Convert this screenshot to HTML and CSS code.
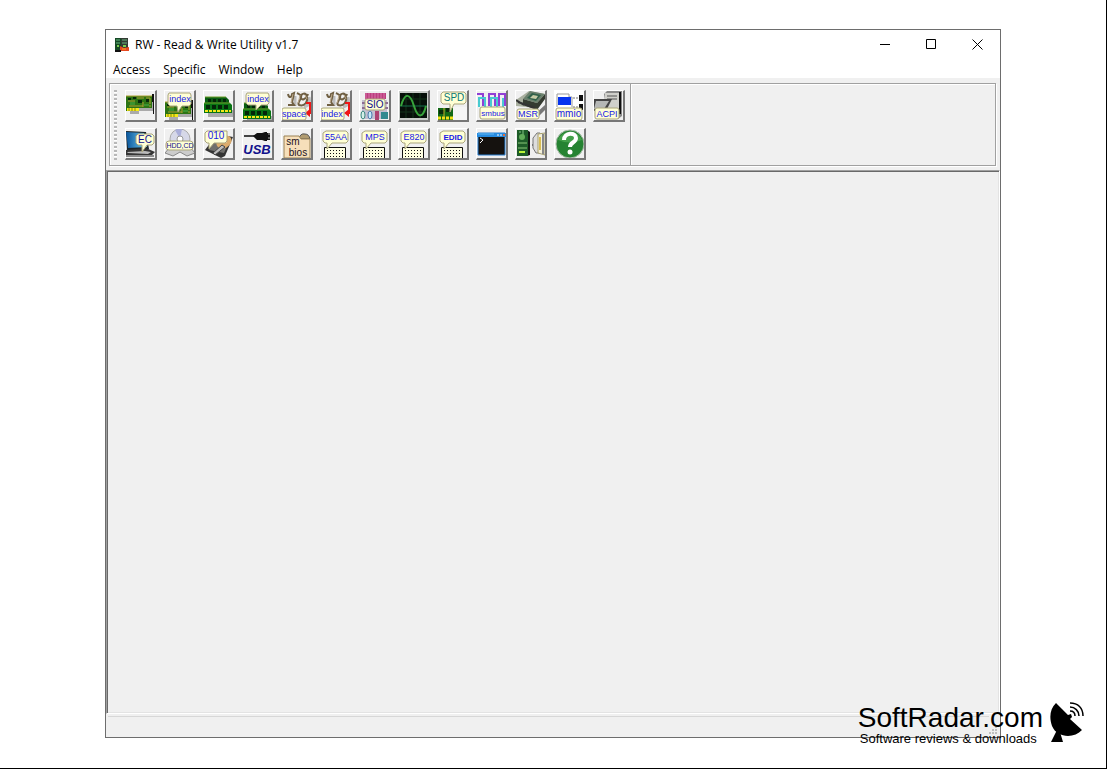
FILE: index.html
```html
<!DOCTYPE html>
<html lang="en">
<head>
<meta charset="utf-8">
<title>RW - Read &amp; Write Utility v1.7</title>
<link rel="stylesheet" href="styles.css">
</head>
<body>
<svg class="defs" aria-hidden="true">
  <defs>
    <symbol id="card" viewBox="0 0 32 32" overflow="visible">
      <path d="M5 11h24v10H14v3H5z" fill="#aaa"/>
      <path d="M1 6h26v12H14v3H1z" fill="#2c7414"/>
      <path d="M1 6h26M3 11h7M12 8h7M21 8h4v6M4 16h14M18 12v5M24 16h2" stroke="#b0a030" fill="none"/>
      <path d="M3 8h3v2H3zM8 7h3v2H8zM13 10h4v3h-4zM21 9h3v3h-3z" fill="#06280a"/>
      <path d="M5 12h5v3H5zM19 14h5v2h-5z" fill="#39932f"/>
      <path d="M2 18h12v3H2z" fill="#f4ea18"/><path d="M4 18v3M7 18v3M10 18v3" stroke="#8a8610"/>
      <path d="M27 4h2v20h-1V12h-1z" fill="#111"/>
    </symbol>
    <symbol id="ram" viewBox="0 0 32 32" overflow="visible">
      <path d="M5 20h26v7H5z" fill="#aaa"/>
      <path d="M2 7h21l3 3v6H2z" fill="#0a5d13"/>
      <path d="M1 13h26l2 2v8H1z" fill="#087414"/>
      <path d="M5 9h3v3H5zM10 9h3v3h-3zM15 9h3v3h-3zM20 9h3v3h-3zM3 15h4v4H3zM9 15h4v4H9zM15 15h4v4h-4zM21 15h4v4h-4z" fill="#042508"/>
      <path d="M2 7h21M1 13h26" stroke="#6d9f28"/>
      <path d="M2 21h26" stroke="#f4e818" stroke-width="2" stroke-dasharray="3 1"/>
    </symbol>
    <symbol id="pad" viewBox="0 0 32 32" overflow="visible">
      <path d="M4.500 19.500h21v11h-21z" fill="#ffffe1" stroke="#111"/>
      <path d="M7 22.500h17M7 25.500h17M7 28.500h17" stroke="#111" stroke-dasharray="1 2"/>
    </symbol>
    <symbol id="balloon" viewBox="0 0 32 32" overflow="visible">
      <path d="M6 3h20l2 2v8l-2 2H12l-5 6v-6H5l-2-2V5z" fill="#ffffd5" stroke="#aaa57d"/>
    </symbol>
    <symbol id="serial" viewBox="0 0 32 32" overflow="visible">
      <g fill="none" stroke="#bbb" stroke-width="3"><path d="M14 6v10M28 7q2 8-5 10"/></g>
      <g fill="none" stroke="#706044" stroke-width="2"><path d="M7 4c1 5 4 3 4 0l2-1-1 5-1 4 2 3H7"/><path d="M16 3c2 1 5 2 4 5-1 3-4 5-2 7 6 2 9-4 8-8-1-5-6-4-6 0s5 3 7-3"/></g>
      <path d="M12 4l-2 9M19 5q-1 5-2 8M24 5l2 4" fill="none" stroke="#bda98b"/>
      <path d="M25 13h4v10h-3" fill="none" stroke="#f01616" stroke-width="2"/><path d="M24 23l5-4v8z" fill="#f01616"/>
    </symbol>
    <linearGradient id="sky" x2="1"><stop stop-color="#08549b"/><stop offset="1" stop-color="#75d0f5"/></linearGradient>
  </defs>
</svg>

<main class="window">
  <header class="titlebar">
    <svg class="app-icon" viewBox="0 0 16 16" aria-hidden="true"><path d="M1 1h6v13H1z" fill="#164826"/><path d="M7 1h7v11H7z" fill="#343b34"/><path d="M2 3h4M2 6h4M8 3h5M8 6h5" stroke="#65b87d"/><path d="M3 8h2v2H3zM9 8h3v2H9z" fill="#78d04d"/><path d="M6 9l4 2 5-1v4H6z" fill="#e64820"/><path d="M1 14h6" stroke="#111" stroke-width="2"/><path d="M8 12h4" stroke="#ffab20"/></svg>
    <h1 class="title">RW - Read &amp; Write Utility v1.7</h1>
    <div class="captions">
      <button class="caption" aria-label="Minimize"><svg viewBox="0 0 11 11"><path d="M0 5.500h10"/></svg></button>
      <button class="caption" aria-label="Maximize"><svg viewBox="0 0 11 11"><path d="M.5.5h9v9h-9z"/></svg></button>
      <button class="caption" aria-label="Close"><svg viewBox="0 0 11 11"><path d="M.5.5l10 10M10.500.5l-10 10"/></svg></button>
    </div>
  </header>
  <nav class="menubar">
    <button class="menu">Access</button><button class="menu">Specific</button><button class="menu">Window</button><button class="menu">Help</button>
  </nav>
  <section class="rebar">
    <div class="band">
      <div class="grip"></div>
      <div class="tools">
        <button class="tool" aria-label="PCI devices"><svg viewBox="1 1 29 29"><use href="#card" width="32" height="32"/></svg></button>
        <button class="tool" aria-label="PCI index"><svg viewBox="1 1 29 29"><use href="#card" y="6" width="32" height="32"/><path d="M5 3h21l1 2v9l-2 2h-7l-4 6-1-6H6l-2-2V5z" fill="#ffffd5" stroke="#aaa57d"/><text class="blue small" x="16" y="12">index</text></svg></button>
        <button class="tool" aria-label="Memory"><svg viewBox="1 1 29 29"><use href="#ram" width="32" height="32"/></svg></button>
        <button class="tool" aria-label="Memory index"><svg viewBox="1 1 29 29"><use href="#ram" y="6" width="32" height="32"/><path d="M5 3h21l1 2v8l-2 2h-6l-5 5v-5H6l-2-2V5z" fill="#ffffd5" stroke="#aaa57d"/><text class="blue small" x="16" y="12">index</text></svg></button>
        <button class="tool" aria-label="IO space"><svg viewBox="1 1 29 29"><use href="#serial" width="32" height="32"/><rect x="1" y="18" width="24" height="12" rx="2" fill="#ffffd5" stroke="#aaa57d"/><text class="blue small" x="13" y="27">space</text></svg></button>
        <button class="tool" aria-label="IO index"><svg viewBox="1 1 29 29"><use href="#serial" width="32" height="32"/><rect x="1" y="18" width="23" height="12" rx="2" fill="#ffffd5" stroke="#aaa57d"/><text class="blue small" x="12" y="27">index</text></svg></button>
        <button class="tool" aria-label="Super IO"><svg viewBox="1 1 29 29"><path d="M6 3h21v6H6z" fill="#bd3f80"/><path d="M7 3v6M10 3v6M13 3v6M16 3v6M19 3v6M22 3v6M25 3v6" stroke="#d678a8"/><path d="M3 10h25v19H3z" fill="#c4bfd2"/><path d="M3 13h4M26 13h3M3 18h4M26 18h3" stroke="#8c6c95" stroke-width="2"/><ellipse cx="4" cy="25" rx="2" ry="4" fill="#d3eee8" stroke="#39867f"/><ellipse cx="11" cy="25" rx="2" ry="4" fill="#c5eafa" stroke="#4977aa"/><path d="M16 21h4v9h-4z" fill="#ae4271"/><path d="M22 22h7v7h-7z" fill="#328990"/><rect x="6" y="9" width="20" height="11" rx="2" fill="#ffffd5" stroke="#aaa57d"/><text class="navy" x="16" y="18">SIO</text></svg></button>
        <button class="tool" aria-label="Clock generator"><svg viewBox="1 1 29 29"><path d="M1 1h29v29H1z" fill="#c8ccc8"/><path d="M2 3h27v25H2z" fill="#061009"/><path d="M8 3v25M15 3v25M22 3v25M2 9h27M2 22h27" stroke="#12331b"/><path d="M2 16h27" stroke="#14734a"/><path d="M3 16C7 2 12 3 16 16s9 12 12 0" fill="none" stroke="#38a43b" stroke-width="2"/></svg></button>
        <button class="tool" aria-label="SPD"><svg viewBox="1 1 29 29"><path d="M1 18h15v12H1z" fill="#126816"/><path d="M2 20h5v4H2zM9 18h4v4H9z" fill="#072b0b"/><path d="M1 28h15" stroke="#f0df16" stroke-width="3" stroke-dasharray="3 1"/><path d="M7 18v9" stroke="#c1af28"/><path d="M16 17h14v13H16z" fill="#f5f5f5"/><path d="M6 2h21l2 2v8l-2 2H17l-4 8v-8H6l-2-2V4z" fill="#ffffd5" stroke="#aaa57d"/><text class="teal" x="17" y="11">SPD</text></svg></button>
        <button class="tool" aria-label="SMBus"><svg viewBox="1 1 29 29"><path d="M1 4h6v12M13 16V4h6v12M23 16V4h6v12" fill="none" stroke="#9140d5" stroke-width="2"/><path d="M3 17V8h6v10h6V8h6v10h6V8" fill="none" stroke="#48cbd1" stroke-width="2"/><rect x="4" y="17" width="25" height="12" rx="2" fill="#ffffd5" stroke="#aaa57d"/><text class="blue tiny" x="17" y="26">smbus</text></svg></button>
        <button class="tool" aria-label="MSR"><svg viewBox="1 1 29 29"><path d="M1 10L14 1l16 3-9 14-20-2z" fill="#aab0a0"/><path d="M8 9l14 4 8-9v5l-8 11-14-5z" fill="#353b31"/><path d="M15 1l15 3-8 9-14-4z" fill="#6b806d"/><path d="M17 3l9 2-5 6-9-3z" fill="#31614a"/><path d="M18 5l5 1-2 3-6-1z" fill="#c6cba5"/><path d="M1 10l8 5M3 12l17 6" stroke="#333" stroke-width="2"/><path d="M20 24l10-9v5l-8 8z" fill="#777"/><rect x="2" y="19" width="22" height="10" rx="2" fill="#ffffd5" stroke="#aaa57d"/><text class="blue small" x="13" y="27">MSR</text></svg></button>
        <button class="tool" aria-label="MMIO"><svg viewBox="1 1 29 29"><path d="M1 1h29v29H1z" fill="#fff"/><path d="M3 17V4h12v3h3v10" fill="none" stroke="#999"/><path d="M4 7h13v8H4z" fill="#0734ef"/><path d="M25 5h4v6h-4zM25 14h4v6h-4z" fill="#111"/><path d="M19 8h6M19 17h6" stroke="#777" stroke-dasharray="2 1"/><rect x="2" y="18" width="26" height="12" rx="2" fill="#ffffd5" stroke="#aaa57d"/><text class="blue" x="15" y="27">mmio</text></svg></button>
        <button class="tool" aria-label="ACPI"><svg viewBox="1 1 29 29"><path d="M11 4l3-3h15v25l-4 3H15z" fill="#888"/><path d="M12 3h14v16H12z" fill="#d0d0cb"/><path d="M14 6h10M14 9h10" stroke="#555"/><path d="M1 9h18l-6 12H1z" fill="#444"/><path d="M3 11h13l-5 8H1z" fill="#b5b7b5"/><path d="M27 2v22" stroke="#111" stroke-width="2"/><rect x="2" y="18" width="24" height="11" rx="2" fill="#ffffd5" stroke="#aaa57d"/><text class="blue small" x="14" y="27">ACPI</text></svg></button>

        <button class="tool" aria-label="Embedded controller"><svg viewBox="1 1 29 29"><path d="M1 3l20 1 3 17-22 2z" fill="#1a242a"/><path d="M1 4l18 1 3 14-19 1z" fill="url(#sky)"/><path d="M1 22l20-2 9 4-4 4-25-1z" fill="#353535"/><path d="M2 24l18-1 6 1-3 2-20-1z" fill="#bbb"/><path d="M1 28h28" stroke="#8c8c8c" stroke-width="2"/><path d="M13 6h14l2 2v7l-2 2h-5l-5 7v-7h-4l-2-2V8z" fill="#ffffd5" stroke="#aaa57d"/><text class="navy" x="20" y="15">EC</text></svg></button>
        <button class="tool" aria-label="HDD and CD"><svg viewBox="1 1 29 29"><circle cx="16" cy="11" r="10" fill="#d6d8e8" stroke="#aaa"/><path d="M16 11L11 2a10 10 0 0 1 7-1zM16 11l5 9 4-5z" fill="#aaaeda"/><circle cx="16" cy="11" r="3" fill="#fff" stroke="#999"/><path d="M1 25l5-6 10 2 10-2 5 6-8 3-7-4-7 4z" fill="#ccc" stroke="#888"/><rect x="2" y="13" width="27" height="9" rx="3" fill="#ffffd5" stroke="#aaa57d"/><text class="navy mini" x="16" y="20">HDD,CD</text></svg></button>
        <button class="tool" aria-label="Disk data"><svg viewBox="1 1 29 29"><path d="M2 22L14 6l16 3-8 19-4 2z" fill="#333"/><path d="M6 22l9-14 13 2-7 15z" fill="#706f6c"/><ellipse cx="21" cy="14" rx="8" ry="6" transform="rotate(-30 21 14)" fill="#dbab6c"/><ellipse cx="21" cy="13" rx="3" ry="2" fill="#eee"/><path d="M10 25l9-8 3 2-10 8z" fill="#bbb" stroke="#444"/><path d="M4 3h20v10l-2 2H11l-5 6v-6H4l-2-2V5z" fill="#ffffd5" stroke="#aaa57d"/><text class="blue" x="13" y="11">010</text></svg></button>
        <button class="tool" aria-label="USB"><svg viewBox="1 1 29 29"><path d="M2 8h12" stroke="#444" stroke-width="2"/><path d="M11 8l4-3h5l3-1h2v9h-2l-3-1h-5zM25 5h3v7h-3z" fill="#111"/><path d="M26 6h2M26 10h2" stroke="#aaa"/><text class="usb" x="15" y="26">USB</text></svg></button>
        <button class="tool" aria-label="SMBIOS"><svg viewBox="1 1 29 29"><path d="M18 11q1-6 6-5 4 0 5 5z" fill="#b09b70" stroke="#555"/><path d="M3 8h15l2 3h9v19H3z" fill="#f6dfba" stroke="#9a8255"/><text class="folder" x="12" y="17">sm</text><text class="folder" x="17" y="28">bios</text></svg></button>
        <button class="tool" aria-label="55AA option ROM"><svg viewBox="1 1 29 29"><use href="#pad" width="32" height="32"/><use href="#balloon" width="32" height="32"/><text class="blue small" x="16" y="12">55AA</text></svg></button>
        <button class="tool" aria-label="MPS"><svg viewBox="1 1 29 29"><use href="#pad" width="32" height="32"/><use href="#balloon" width="32" height="32"/><text class="blue small" x="16" y="12">MPS</text></svg></button>
        <button class="tool" aria-label="E820"><svg viewBox="1 1 29 29"><use href="#pad" width="32" height="32"/><use href="#balloon" width="32" height="32"/><text class="blue small" x="16" y="12">E820</text></svg></button>
        <button class="tool" aria-label="EDID"><svg viewBox="1 1 29 29"><use href="#pad" width="32" height="32"/><use href="#balloon" width="32" height="32"/><text class="blue tiny bold" x="16" y="12">EDID</text></svg></button>
        <button class="tool" aria-label="Command"><svg viewBox="1 1 29 29"><path d="M2 5h27v22H2z" fill="#15120f" stroke="#287fd2"/><path d="M1 5h29v4H1z" fill="#268be0"/><path d="M2 6h16" stroke="#62b9f4"/><path d="M21 7h2M24 7h2" stroke="#fff"/><path d="M27 7h2" stroke="#e36d37" stroke-width="2"/><path d="M4 10l3 2-3 3" fill="none" stroke="#fff"/></svg></button>
        <button class="tool" aria-label="Remote access"><svg viewBox="1 1 29 29"><path d="M12 2l3 2v23l-3 1z" fill="#111"/><path d="M2 2h11v26H2z" fill="#1d5c28"/><path d="M8 2v8M4 4h2" stroke="#84c483"/><circle cx="7" cy="9" r="3" fill="#62ad5a"/><path d="M3 15h9M3 20h9" stroke="#8bc778"/><path d="M4 24h6" stroke="#b8f438" stroke-width="2"/><path d="M17 17h3" stroke="#777" stroke-width="2"/><path d="M18 10l4-5h3v20h-4l-3-5z" fill="#ddd" stroke="#777"/><path d="M23 6l7-1v22l-7-2z" fill="#f4f1db" stroke="#a69f70"/><path d="M25 9v13" stroke="#d8bd54" stroke-width="2"/><path d="M28 6v20" stroke="#888" stroke-width="2"/></svg></button>
        <button class="tool" aria-label="Help"><svg viewBox="1 1 29 29"><circle cx="16" cy="16" r="14" fill="#258332" stroke="#a9bda9"/><path d="M4 12A13 13 0 0 1 28 12Q16 17 4 12" fill="#43a04a"/><path d="M10 12c0-8 12-8 12-2 0 5-6 4-6 9" fill="none" stroke="#fff" stroke-width="4"/><circle cx="16" cy="24" r="2.500" fill="#fff"/></svg></button>
      </div>
    </div>
  </section>
  <section class="workspace" aria-label="Workspace"></section>
  <footer class="status"><div class="status-pane"></div><svg class="size-grip" viewBox="0 0 8 8" aria-hidden="true"><path d="M6 0h2v2H6zM3 3h2v2H3zM6 3h2v2H6zM0 6h2v2H0zM3 6h2v2H3zM6 6h2v2H6z" fill="#bfbfbf"/></svg></footer>
</main>
<aside class="watermark">
  <div><p class="brand">SoftRadar.com</p><p class="tagline">Software reviews &amp; downloads</p></div>
  <svg class="dish" viewBox="0 0 34 42" aria-hidden="true"><path d="M6 2L18 14l3-1 1 3-2 2 12 11C24 38 7 37 2 25-1 16 0 8 6 2z"/><path d="M7 29L1 41h12l-3-10z"/><path d="M20 10c3 0 5 2 5 5M20 6c5 0 9 4 9 9M20 2c8 0 13 5 13 13" fill="none" stroke="#000" stroke-width="1.500"/></svg>
</aside>
</body>
</html>
```
FILE: styles.css
```css
* { box-sizing: border-box; }
body {
  margin: 0;
  min-height: 100vh;
  display: flex;
  position: relative;
  padding: 29px 105px 30px;
  background: #fff;
  border-right: 1px solid #000;
  border-bottom: 1px solid #000;
  font-family: "Open Sans", "Noto Sans", sans-serif;
  font-size: 12px;
  color: #000;
}
.defs { position: absolute; width: 0; height: 0; }
button { font: inherit; color: inherit; background: none; border: 0; padding: 0; }
.window {
  flex: 1;
  min-width: 0;
  display: flex;
  flex-direction: column;
  background: #f0f0f0;
  border: 1px solid #6d6d6d;
}
.titlebar { display: flex; align-items: center; height: 29px; padding-left: 8px; background: #fff; }
.app-icon { width: 16px; height: 16px; margin-right: 5px; }
.title { margin: 0; font-size: 12px; font-weight: 400; white-space: nowrap; }
.captions { display: flex; margin-left: auto; }
.caption { width: 46px; height: 28px; display: flex; align-items: center; justify-content: center; }
.caption svg { width: 11px; height: 11px; fill: none; stroke: #000; }
.menubar { display: flex; height: 19px; gap: 13px; padding-left: 7px; background: #fff; }
.menu { line-height: 21px; height: 21px; }
.rebar {
  margin: 5px 4px 4px 3px;
  border: 1px solid #a0a0a0;
  box-shadow: inset 1px 1px #fff, 1px 1px #fff;
  display: flex;
}
.band { display: flex; padding: 6px 5px 5px 4px; border-right: 1px solid #a0a0a0; box-shadow: 1px 0 #fff; }
.grip {
  width: 3px;
  margin-right: 8px;
  background: repeating-linear-gradient(#b8b8b8 0 2px, #fff 2px 3px, transparent 3px 4px);
}
.tools { display: grid; grid-template-columns: repeat(13, 32px); gap: 6px 7px; }
.tool {
  width: 32px;
  height: 32px;
  background: #f0f0f0;
  border: 1px solid #fff;
  border-right: 2px solid #777;
  border-bottom: 2px solid #777;
}
.tool svg { display: block; width: 29px; height: 29px; }
.tool text { font-family: "Liberation Sans", Arial, sans-serif; font-size: 10px; text-anchor: middle; }
.tool .small { font-size: 9px; }
.tool .tiny { font-size: 8px; }
.tool .mini { font-size: 7px; }
.tool .bold { font-weight: 700; }
.blue { fill: #1818e8; }
.navy { fill: #10108c; }
.teal { fill: #087878; }
.tool .usb { font-size: 13px; font-weight: 700; font-style: italic; fill: #10108c; }
.tool .folder { font-size: 10px; fill: #211020; }
.workspace {
  flex: 1;
  border: 1px solid #a0a0a0;
  border-right-color: #fff;
  border-bottom-color: #fff;
  box-shadow: inset 1px 1px #696969, inset -1px -1px #e3e3e3;
}
.status { display: flex; align-items: flex-end; height: 23px; padding: 2px 3px 3px 2px; }
.status-pane { flex: 1; align-self: flex-start; border-top: 1px solid #d7d7d7; }
.size-grip { width: 8px; height: 8px; }
.watermark { position: absolute; right: 22px; bottom: 23px; display: flex; gap: 7px; font-family: "Liberation Sans", Arial, sans-serif; white-space: nowrap; }
.brand, .tagline { margin: 0; }
.brand { font-size: 28px; line-height: 28px; padding-top: 3px; }
.tagline { font-size: 13px; line-height: 13px; padding-left: 2px; }
.dish { width: 34px; height: 42px; }
```
